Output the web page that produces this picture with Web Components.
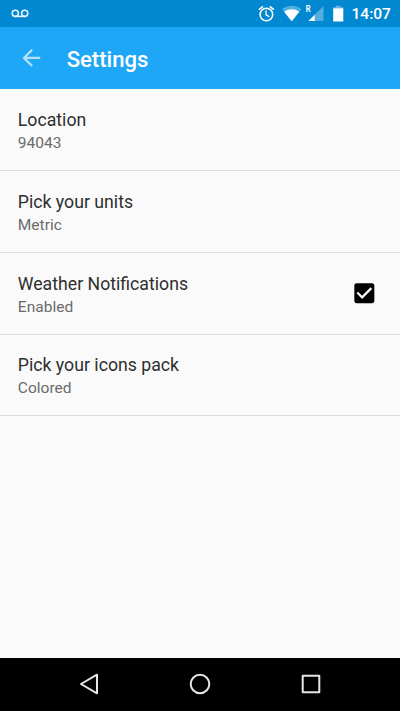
<!DOCTYPE html>
<html lang="en">
<head>
<meta charset="utf-8">
<title>Settings</title>
<style>
html,body{margin:0;height:100%}
body{font-family:Roboto,"Noto Sans",sans-serif;background:#fafafa;overflow:hidden}
</style>
</head>
<body>
<settings-screen></settings-screen>
<script>
const define = (name, html) => customElements.define(name, class extends HTMLElement {
  constructor() {
    super();
    this.attachShadow({mode: 'open'}).innerHTML = html;
  }
});

define('status-bar', `
<style>
:host{display:flex;align-items:flex-start;height:26.67px;box-sizing:border-box;background:#0288d1;color:#fff}
svg{display:block;flex:none}
.grow{flex:1}
time{font-size:15.56px;font-weight:500;line-height:18px;padding-top:5.2px;width:48.5px;white-space:nowrap}
</style>
<svg width="40" height="26" viewBox="0 0 40 26" fill="none" stroke="#e3f2fb" stroke-width="1.6"><circle cx="15.3" cy="13.3" r="3.1"/><circle cx="24.7" cy="13.3" r="3.1"/><path d="M15.3 16.4H24.7"/></svg>
<span class="grow"></span>
<svg width="101.5" height="26" viewBox="250 0 101.5 26">
  <g fill="none" stroke="#fff" stroke-width="1.6"><circle cx="266.4" cy="14.5" r="6.3"/><path d="M259 9.6L263 6.3M269.8 6.3L273.8 9.6"/><path d="M266.1 10.6V14.9L269.4 16.9" stroke-width="1.3"/></g>
  <path d="M282 9.1Q291.7 2.6 301.4 9.1L291.7 21.2Z" fill="#fff" opacity=".32"/>
  <path d="M284.1 11.7Q291.7 6.8 299.3 11.7L291.7 21.2Z" fill="#fff"/>
  <path d="M323.5 6V21H308.4Z" fill="#fff" opacity=".32"/>
  <path d="M314.7 14.8V21H308.4Z" fill="#fff"/>
  <text x="305.8" y="12.2" font-family="Roboto,sans-serif" font-size="8.5" font-weight="700" fill="#fff" textLength="4.8" lengthAdjust="spacingAndGlyphs">R</text>
  <path d="M333.2 7.3H336V5.8H340.5V7.3H343.3V8.6H333.2Z" fill="#fff" opacity=".4"/>
  <path d="M333.2 8.3H343.3V21.5H333.2Z" fill="#fff"/>
</svg>
<time>14:07</time>`);

define('app-bar', `
<style>
:host{display:flex;align-items:center;height:62.33px;box-sizing:border-box;background:#1ea7f6;color:#fff;padding-left:17.8px}
svg{display:block;flex:none;margin-right:22.2px;padding-top:.6px}
h1{margin:0;font-size:22.1px;font-weight:500;line-height:26px;padding-top:2px}
</style>
<svg width="26.67" height="26.67" viewBox="0 0 24 24" fill="#b6e1fc"><path d="M20 11H7.83l5.59-5.59L12 4l-8 8 8 8 1.41-1.41L7.83 13H20v-2z"/></svg>
<h1><slot></slot></h1>`);

define('preference-row', `
<style>
:host{display:flex;align-items:center;height:81.85px;box-sizing:border-box;padding:0 22px 0 17.8px;border-bottom:1px solid #dedede}
.text{flex:1;padding-top:4px}
.title{font-size:17.7px;line-height:23px;color:#2e2e2e}
.summary{font-size:15.56px;line-height:22px;color:#6b6b6b}
</style>
<div class="text"><div class="title"><slot></slot></div><div class="summary"><slot name="summary"></slot></div></div>
<slot name="widget"></slot>`);

define('check-box', `
<style>:host{display:block}svg{display:block}</style>
<svg width="26.67" height="26.67" viewBox="0 0 24 24"><path d="M19 3H5c-1.11 0-2 .9-2 2v14c0 1.1.89 2 2 2h14c1.11 0 2-.9 2-2V5c0-1.1-.89-2-2-2zm-9 14l-5-5 1.41-1.41L10 14.17l7.59-7.59L19 8l-9 9z"/></svg>`);

define('navigation-bar', `
<style>
:host{display:flex;justify-content:center;gap:79px;align-items:center;height:53.5px;background:#000}
svg{display:block}
</style>
<svg width="32" height="32" viewBox="0 0 32 32" fill="none" stroke="#e5e5e5" stroke-width="2" stroke-linejoin="round"><path d="M8 16L24 6.7V25.3Z"/></svg>
<svg width="32" height="32" viewBox="0 0 32 32" fill="none" stroke="#e5e5e5" stroke-width="2"><circle cx="16" cy="16" r="9.3"/></svg>
<svg width="32" height="32" viewBox="0 0 32 32" fill="none" stroke="#e5e5e5" stroke-width="2" stroke-linejoin="round"><path d="M7.7 7.7H24.3V24.3H7.7Z"/></svg>`);

define('settings-screen', `
<style>
:host{display:flex;flex-direction:column;height:711px;background:#fafafa}
main{flex:1}
</style>
<status-bar></status-bar>
<app-bar>Settings</app-bar>
<main>
<preference-row>Location<span slot="summary">94043</span></preference-row>
<preference-row>Pick your units<span slot="summary">Metric</span></preference-row>
<preference-row>Weather Notifications<span slot="summary">Enabled</span><check-box slot="widget"></check-box></preference-row>
<preference-row>Pick your icons pack<span slot="summary">Colored</span></preference-row>
</main>
<navigation-bar></navigation-bar>`);
</script>
</body>
</html>
